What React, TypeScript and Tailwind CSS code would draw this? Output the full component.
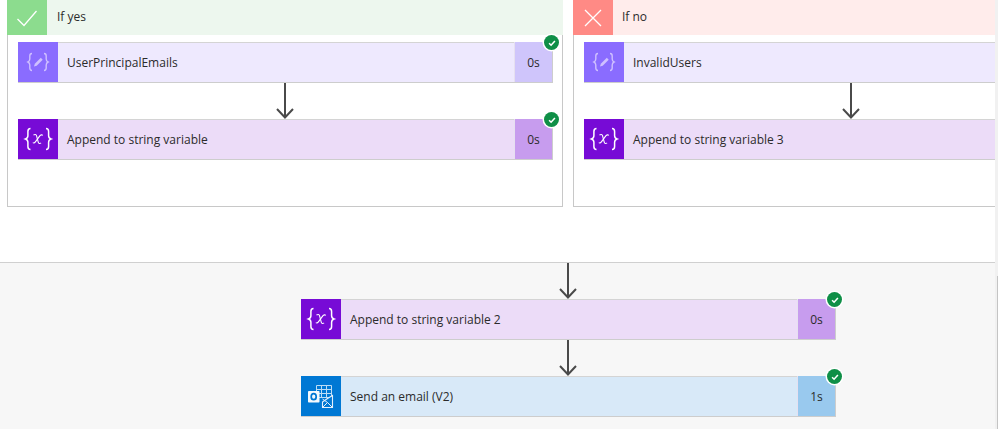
const VarIcon = () => (
  <svg width="40" height="40" viewBox="0 0 40 40" className="text-white">
    <path d="M12.5 9.5c-2.4 0-2.6 1.2-2.6 3v4.2c0 1.6-.7 2.7-2.4 3.3 1.7.6 2.4 1.700 2.400 3.300v4.200c0 1.800.2 3 2.600 3" fill="none" stroke="currentColor" strokeWidth="1.5" />
    <path d="M28 9.500c2.400 0 2.600 1.200 2.600 3v4.200c0 1.600.7 2.700 2.400 3.300-1.700.6-2.400 1.700-2.400 3.300v4.200c0 1.800-.2 3-2.600 3" fill="none" stroke="currentColor" strokeWidth="1.5" />
    <path d="M15.500 16c1.300-.8 2.600-.8 3 .6l1.800 6.800c.4 1.400 1.600 1.400 2.800.5" fill="none" stroke="currentColor" strokeWidth="1.100" />
    <path d="M24.800 16.400c-.9-.9-2.100-.6-3 .5l-4.400 6c-.8 1.100-1.800 1.300-2.600.7" fill="none" stroke="currentColor" strokeWidth="1.100" />
  </svg>
);

const PenIcon = () => (
  <svg width="40" height="40" viewBox="0 0 40 40" className="text-[#cfc0ff]">
    <path d="M14 11.500c-2 0-2.200 1-2.200 2.400v3.200c0 1.300-.5 2.300-1.800 2.900 1.300.6 1.800 1.600 1.800 2.900v3.200c0 1.400.2 2.400 2.200 2.400" fill="none" stroke="currentColor" strokeWidth="1.400" />
    <path d="M26 11.500c2 0 2.200 1 2.200 2.400v3.200c0 1.300.5 2.300 1.800 2.900-1.300.6-1.800 1.600-1.800 2.900v3.200c0 1.400-.2 2.400-2.200 2.400" fill="none" stroke="currentColor" strokeWidth="1.400" />
    <path d="M22.800 15.800l1.900 1.900-6 6-2.700.8.800-2.700z" fill="currentColor" />
  </svg>
);

const OutlookIcon = () => (
  <svg width="40" height="40" viewBox="0 0 40 40">
    <g fill="none" stroke="#bcdcf5" strokeWidth="1">
      <path d="M15.500 9.500h15v12h-15z" />
      <path d="M20.500 9.500v12M25.500 9.500v12M15.500 13.500h15M15.500 17.500h15" />
    </g>
    <path d="M21.500 26l5-3.500 5-3V31.500h-10z" fill="#0078d4" stroke="#e4f0fb" strokeWidth="1.100" />
    <path d="M21.500 31.500l5-5 5 5M21.500 23l5 3.500" stroke="#e4f0fb" strokeWidth="1" fill="none" />
    <rect x="7" y="15" width="11.500" height="11.500" rx=".8" fill="#f4f9fd" />
    <ellipse cx="12.700" cy="20.700" rx="2.500" ry="3" fill="none" stroke="#0078d4" strokeWidth="1.700" />
  </svg>
);

const CheckBadge = () => (
  <div className="absolute right-[-7px] top-[-7px] flex h-[15px] w-[15px] items-center justify-center rounded-full bg-[#0f8f47] shadow-[0_0_0_1.5px_#fff]">
    <svg width="10" height="10" viewBox="0 0 11 11">
      <path d="M2.300 5.700l2.200 2.200 4.200-4.600" fill="none" stroke="#fff" strokeWidth="1.700" />
    </svg>
  </div>
);

const styles = {
  pen: { icon: "bg-[#8a6cff]", body: "bg-[#eee9fe]", dur: "bg-[#cfc5fb]" },
  variable: { icon: "bg-[#770bd6]", body: "bg-[#ecdcf8]", dur: "bg-[#c79cee]" },
  mail: { icon: "bg-[#0078d4]", body: "bg-[#d8e9f8]", dur: "bg-[#99c9ee]" },
};

function Card({ kind, label, time, done = true }: { kind: "pen" | "variable" | "mail"; label: string; time?: string; done?: boolean }) {
  const s = styles[kind];
  return (
    <div className={`relative flex h-[41px] w-[535px] shrink-0 border-b border-r border-[#cdcdcd] shadow-[inset_0_1px_0_#d4d4d4] ${s.body}`}>
      <div className={`flex h-[40px] w-[40px] shrink-0 items-center justify-center ${s.icon}`}>
        {kind === "pen" ? <PenIcon /> : kind === "variable" ? <VarIcon /> : <OutlookIcon />}
      </div>
      <div className="flex flex-1 items-center pl-[9px] pt-[1px] text-[12px] text-[#2b2b2b]">{label}</div>
      {time && (
        <div className={`flex w-[38px] items-center justify-center border-l border-[#e6e0f0] pt-[1px] text-[12px] text-[#2b2b2b] ${s.dur}`}>
          {time}
        </div>
      )}
      {done && <CheckBadge />}
    </div>
  );
}

const Arrow = () => (
  <svg width="20" height="36" viewBox="0 0 20 36" className="shrink-0">
    <path d="M10 0v35" stroke="#4a4a4a" strokeWidth="2" fill="none" />
    <path d="M2 26l8 8.500 8-8.500" stroke="#4a4a4a" strokeWidth="2" fill="none" />
  </svg>
);

function Branch({ yes, className, label, children }: { yes: boolean; className: string; label: string; children: React.ReactNode }) {
  return (
    <div className={`flex h-[207px] flex-col overflow-hidden ${className}`}>
      <div className={`flex h-[35px] shrink-0 items-center ${yes ? "bg-[#edf7ee]" : "bg-[#ffeceb]"}`}>
        <div className={`flex h-[35px] w-[40px] shrink-0 items-center justify-center ${yes ? "bg-[#8cdc8e]" : "bg-[#ff8a85]"}`}>
          {yes ? (
            <svg width="24" height="24" viewBox="0 0 24 24">
              <path d="M2.500 13l6.500 6.500L21.500 5" fill="none" stroke="#fff" strokeWidth="1.300" />
            </svg>
          ) : (
            <svg width="24" height="24" viewBox="0 0 24 24">
              <path d="M4 4l16 16M20 4L4 20" fill="none" stroke="#fff" strokeWidth="1.300" />
            </svg>
          )}
        </div>
        <span className={`pb-[2px] text-[12px] text-[#2b2b2b] ${yes ? "pl-[10px]" : "pl-[9px]"}`}>{label}</span>
      </div>
      <div className={`flex flex-1 flex-col border-b border-l border-[#c8c8c8] pl-[10px] pt-[7px] ${yes ? "border-r" : ""}`}>{children}</div>
    </div>
  );
}

export default function App() {
  return (
    <div className="flex h-[429px] w-[998px] overflow-hidden bg-white font-['Open_Sans','Noto_Sans',sans-serif]">
      <div className="flex h-full w-[995px] flex-col">
        <div className="flex h-[262px] shrink-0 gap-[10px] pl-[7px]">
          <Branch yes className="w-[556px]" label="If yes">
            <Card kind="pen" label="UserPrincipalEmails" time="0s" />
            <div className="ml-[257px]"><Arrow /></div>
            <Card kind="variable" label="Append to string variable" time="0s" />
          </Branch>
          <Branch yes={false} className="flex-1" label="If no">
            <Card kind="pen" label="InvalidUsers" done={false} />
            <div className="ml-[257px]"><Arrow /></div>
            <Card kind="variable" label="Append to string variable 3" done={false} />
          </Branch>
        </div>
        <div className="flex-1 border-t border-[#d0d0d0] bg-[#f7f7f7] pl-[301px]">
          <div className="flex w-[535px] flex-col">
            <div className="ml-[257px]"><Arrow /></div>
            <Card kind="variable" label="Append to string variable 2" time="0s" />
            <div className="ml-[257px]"><Arrow /></div>
            <Card kind="mail" label="Send an email (V2)" time="1s" />
          </div>
        </div>
      </div>
      <div className="flex h-full w-[3px] flex-col bg-[#f1f1f1]">
        <div className="h-[276px]" />
        <div className="ml-[2px] w-[1px] flex-1 bg-[#c4c4c4]" />
      </div>
    </div>
  );
}
